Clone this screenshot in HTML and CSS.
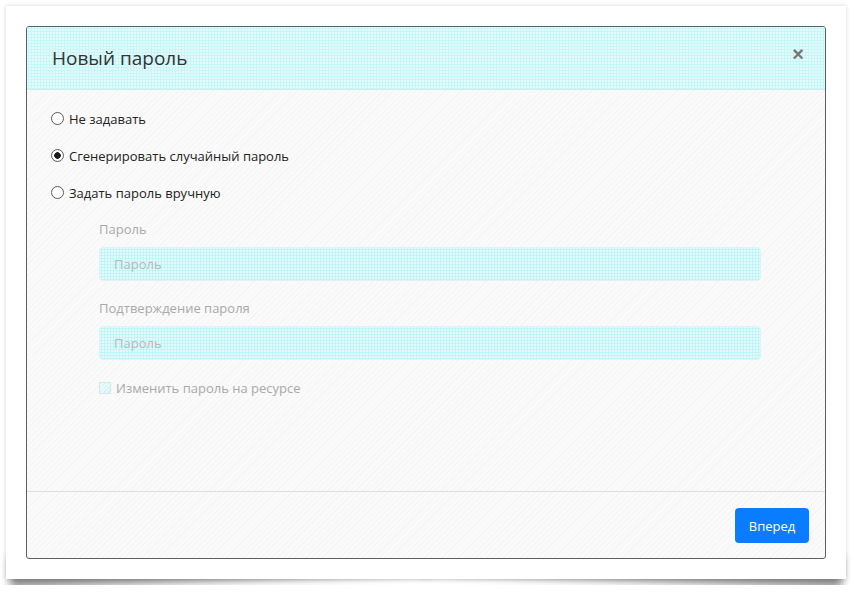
FILE: index.html
```html
<!DOCTYPE html>
<html lang="ru">
<head>
    <meta charset="UTF-8">
    <meta name="viewport" content="width=device-width, initial-scale=1.0">
    <title>Новый пароль</title>
    <link rel="stylesheet" href="styles.css">
</head>
<body>
    <!-- Screenshot frame -->
    <div class="frame">
        <div class="modal">
            <!-- Header -->
            <div class="modal-header">
                <h2 class="modal-title">Новый пароль</h2>
                <button class="close-btn" type="button">&times;</button>
            </div>

            <!-- Body -->
            <div class="modal-body">
                <label class="radio-row">
                    <input type="radio" name="mode" class="radio">
                    <span>Не задавать</span>
                </label>
                <label class="radio-row">
                    <input type="radio" name="mode" class="radio" checked>
                    <span>Сгенерировать случайный пароль</span>
                </label>
                <label class="radio-row">
                    <input type="radio" name="mode" class="radio">
                    <span>Задать пароль вручную</span>
                </label>

                <div class="manual">
                    <div class="form-group">
                        <div class="field-label">Пароль</div>
                        <input type="password" class="field-input" placeholder="Пароль" disabled>
                    </div>
                    <div class="form-group">
                        <div class="field-label">Подтверждение пароля</div>
                        <input type="password" class="field-input" placeholder="Пароль" disabled>
                    </div>
                    <label class="check-row">
                        <input type="checkbox" class="check" disabled>
                        <span>Изменить пароль на ресурсе</span>
                    </label>
                </div>
            </div>

            <!-- Footer -->
            <div class="modal-footer">
                <button class="next-btn" type="button">Вперед</button>
            </div>
        </div>
    </div>
</body>
</html>
```

FILE: styles.css
```css
/* General Styles */
body {
    margin: 0;
    padding: 6px;
    background-color: #fff;
    font-family: 'Open Sans', 'Noto Sans', sans-serif;
    color: #212529;
}

/* Screenshot frame with lifted-corner shadow */
.frame {
    position: relative;
    width: 800px;
    height: 533px;
    padding: 20px;
    background-color: #fff;
    box-shadow: 0 0 4px rgba(0, 0, 0, 0.18);
}

.frame::before,
.frame::after {
    content: "";
    position: absolute;
    z-index: -1;
    bottom: 16px;
    left: 3px;
    width: 50%;
    height: 30px;
    background-color: #8a8a8a;
    box-shadow: 0 18px 9px #8a8a8a;
    transform: rotate(-1.8deg);
}

.frame::after {
    left: auto;
    right: 3px;
    transform: rotate(1.8deg);
}

/* Modal */
.modal {
    display: flex;
    flex-direction: column;
    height: 531px;
    border: 1px solid #5f5f5f;
    border-radius: 3px;
    background-color: #fafafa;
    background-image: repeating-linear-gradient(135deg, rgba(0, 0, 0, 0.018) 0 1px, transparent 1px 4px);
    overflow: hidden;
}

.modal-header {
    display: flex;
    justify-content: space-between;
    align-items: center;
    height: 62px;
    padding: 0 17px 0 25px;
    border-bottom: 1px solid #c9eef0;
    background-color: #e4fbfc;
    background-image: radial-gradient(#c6f6f8 1px, transparent 1.2px);
    background-size: 3px 3px;
}

.modal-title {
    margin: 0;
    font-size: 19px;
    font-weight: 400;
    color: #333;
}

.close-btn {
    border: none;
    background: none;
    padding: 0 4px;
    font-family: 'Liberation Sans', sans-serif;
    font-size: 20px;
    font-weight: bold;
    color: #777;
    line-height: 1;
    margin-top: -8px;
}

.modal-body {
    flex: 1;
    padding: 18px 24px 0 24px;
}

/* Radios */
.radio-row {
    display: flex;
    align-items: center;
    gap: 5px;
    height: 21px;
    margin-bottom: 16px;
    font-size: 13px;
    color: #222;
}

.radio {
    appearance: none;
    width: 13px;
    height: 13px;
    margin: 0;
    border: 1px solid #5a5a5a;
    border-radius: 50%;
    background-color: #fff;
}

.radio:checked {
    background-image: radial-gradient(#1a1a1a 3px, transparent 3.5px);
}

/* Manual password section */
.manual {
    margin: 0 40px 0 48px;
}

.form-group {
    margin-bottom: 17px;
}

.field-label {
    height: 21px;
    line-height: 21px;
    margin-bottom: 7px;
    font-size: 13px;
    color: #a9a9a9;
}

.field-input {
    box-sizing: border-box;
    width: 100%;
    height: 34px;
    padding: 0 14px;
    border: 1px solid #ddf3f4;
    border-radius: 4px;
    font-family: inherit;
    font-size: 13px;
    background-color: #e3fbfc;
    background-image: radial-gradient(#c0f4f6 1px, transparent 1.2px);
    background-size: 3px 3px;
}

.field-input::placeholder {
    color: #b9b9b9;
}

.check-row {
    display: flex;
    align-items: center;
    gap: 5px;
    height: 21px;
    font-size: 13px;
    color: #a9a9a9;
}

.check {
    appearance: none;
    width: 12px;
    height: 12px;
    margin: 0;
    border: 1px solid #cde9ea;
    background-color: #eafbfb;
    background-image: repeating-linear-gradient(135deg, #d6f1f2 0 1px, transparent 1px 3px);
}

/* Footer */
.modal-footer {
    display: flex;
    justify-content: flex-end;
    height: 67px;
    padding: 16px 16px 0 0;
    box-sizing: border-box;
    border-top: 1px solid #dedede;
}

.next-btn {
    width: 74px;
    height: 35px;
    border: none;
    border-radius: 4px;
    background-color: #0a7cff;
    color: #fff;
    font-family: inherit;
    font-size: 13px;
}
```
